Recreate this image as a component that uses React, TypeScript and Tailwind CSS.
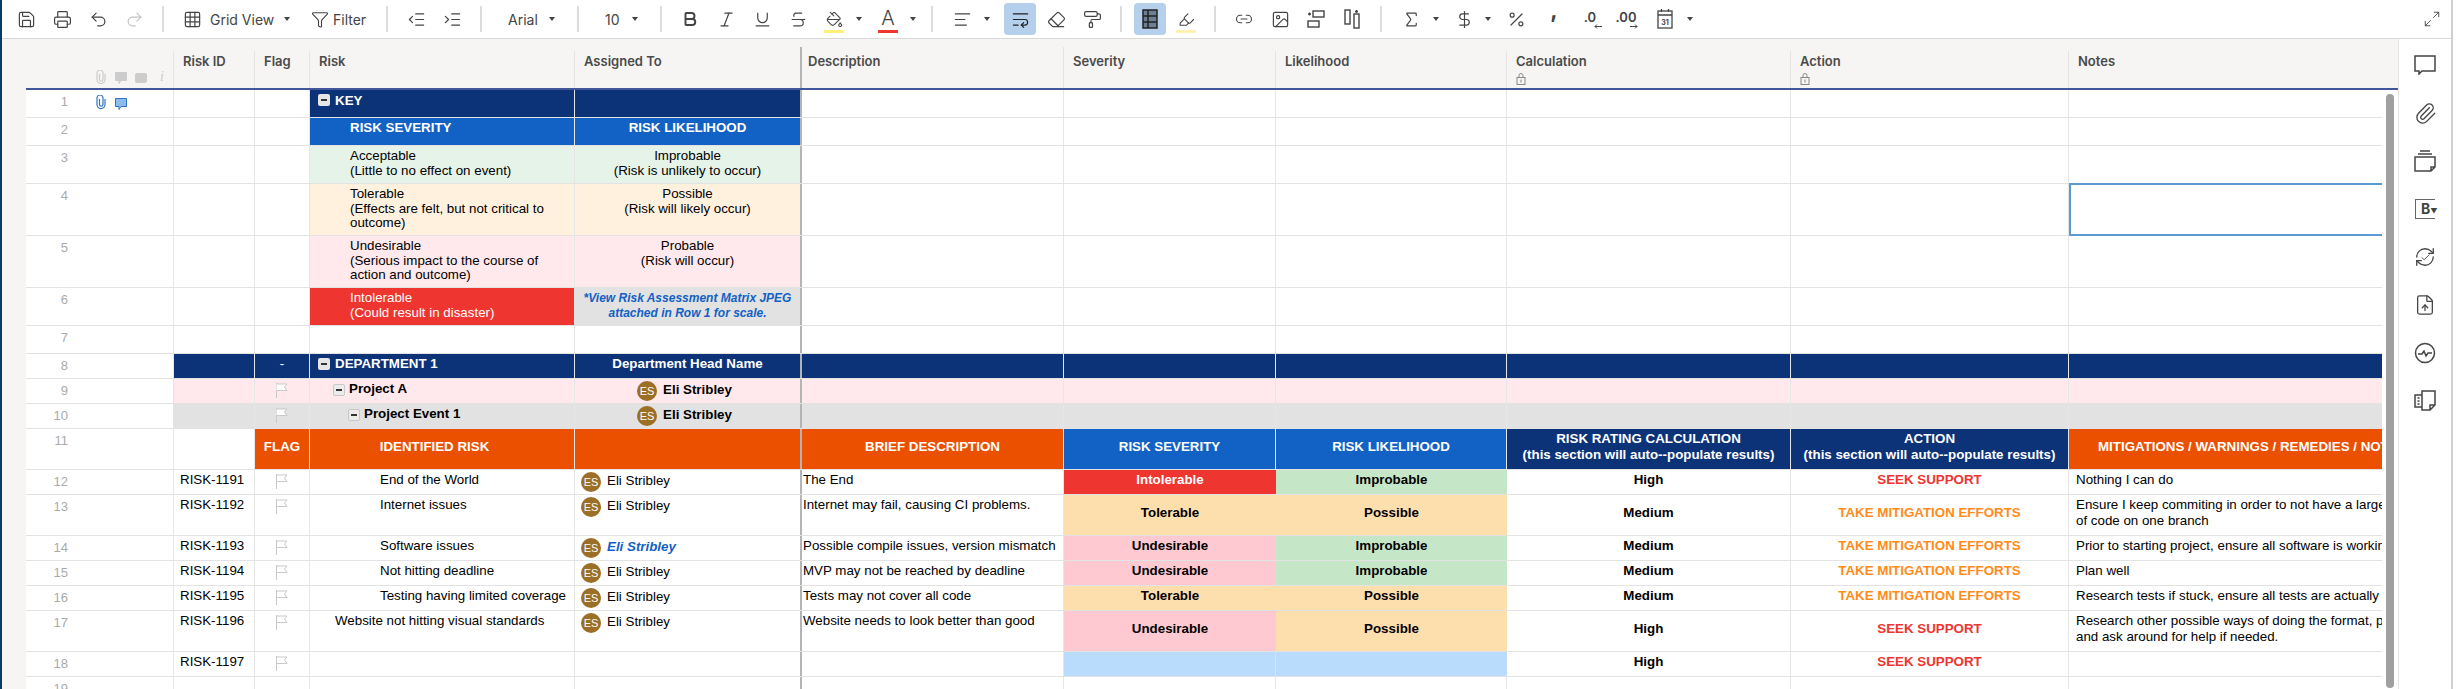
import type { ReactNode } from "react";
import { twMerge } from "tailwind-merge";
import {
  AlignLeft,
  Bold,
  Check,
  Eraser,
  FileUp,
  Funnel,
  Grid3x3,
  Highlighter,
  Image,
  IndentDecrease,
  IndentIncrease,
  Italic,
  Maximize2,
  PaintBucket,
  PaintRoller,
  Paperclip,
  Percent,
  Printer,
  Redo2,
  RefreshCw,
  Save,
  Sigma,
  DollarSign,
  Strikethrough,
  Underline,
  Undo2,
  Link2,
  WrapText,
} from "lucide-react";

const ic = { size: 19, strokeWidth: 1.5, color: "#444" };

function Btn({ children, className }: { children?: ReactNode; className?: string }) {
  return <div className={twMerge("flex h-[32px] w-[36px] shrink-0 items-center justify-center", className)}>{children}</div>;
}

function Caret({ className }: { className?: string }) {
  return (
    <svg viewBox="0 0 8 6" className={twMerge("h-[6px] w-[8px] shrink-0", className)}>
      <path d="M1 1h6L4 5z" fill="#444" />
    </svg>
  );
}

function Sep({ className }: { className?: string }) {
  return <div className={twMerge("ml-[10px] h-[26px] w-[2px] shrink-0 bg-[#dcdcdc]", className)} />;
}

function ColorBar({ color }: { color: string }) {
  return <div className="absolute bottom-[2px] left-[8px] h-[3px] w-[20px]" style={{ backgroundColor: color }} />;
}

function TinyArrow({ flip }: { flip?: boolean }) {
  return (
    <svg viewBox="0 0 8 5" className={twMerge("absolute bottom-[5px] right-[6px] h-[5px] w-[8px]", flip ? "rotate-180" : "")} fill="none" stroke="#444" strokeWidth="1">
      <path d="M8 2.5H1M3 .5l-2 2 2 2" />
    </svg>
  );
}

function Toolbar() {
  return (
    <div className="flex h-[39px] items-center border-b border-[#d8d8d8] pl-[6px] font-['Inter',sans-serif] text-[14px] text-[#444]">
      <Btn><Save {...ic} /></Btn>
      <Btn><Printer {...ic} /></Btn>
      <Btn><Undo2 {...ic} /></Btn>
      <Btn><Redo2 {...ic} color="#c4c4c4" /></Btn>
      <Sep />
      <Btn className="ml-[16px] w-[24px]"><Grid3x3 {...ic} /></Btn>
      <span className="ml-[6px] w-[61px] shrink-0 whitespace-nowrap">Grid View</span>
      <Caret className="ml-[12px]" />
      <Btn className="ml-[20px] w-[18px]"><Funnel {...ic} /></Btn>
      <span className="ml-[4px] w-[31px] shrink-0">Filter</span>
      <Sep className="ml-[22px]" />
      <Btn className="ml-[10px]"><IndentDecrease {...ic} /></Btn>
      <Btn><IndentIncrease {...ic} /></Btn>
      <Sep />
      <span className="ml-[26px] w-[29px] shrink-0">Arial</span>
      <Caret className="ml-[11px]" />
      <Sep className="ml-[21px]" />
      <span className="ml-[26px] w-[15px] shrink-0">10</span>
      <Caret className="ml-[11px]" />
      <Sep className="ml-[21px]" />
      <Btn className="ml-[10px]"><Bold size={18} strokeWidth={2.6} color="#444" /></Btn>
      <Btn><Italic {...ic} /></Btn>
      <Btn><Underline {...ic} /></Btn>
      <Btn><Strikethrough {...ic} /></Btn>
      <Btn className="relative"><PaintBucket size={17} strokeWidth={1.5} color="#444" /><ColorBar color="#fff176" /></Btn>
      <Caret className="ml-[3px]" />
      <Btn className="relative ml-[7px]">
        <span className="-mt-[3px] text-[20px] font-light leading-none">A</span>
        <ColorBar color="#ee3530" />
      </Btn>
      <Caret className="ml-[3px]" />
      <Sep className="ml-[14px]" />
      <Btn className="ml-[11px]"><AlignLeft {...ic} /></Btn>
      <Caret className="ml-[3px]" />
      <Btn className="ml-[13px] w-[32px] rounded-[4px] bg-[#b5d0ec]"><WrapText {...ic} color="#222" /></Btn>
      <Btn className="ml-[2px]"><Eraser {...ic} /></Btn>
      <Btn><PaintRoller {...ic} /></Btn>
      <Sep />
      <Btn className="ml-[12px] w-[32px] rounded-[4px] bg-[#b5d0ec]">
        <svg viewBox="0 0 16 20" className="h-[20px] w-[16px]" fill="none" stroke="#222" strokeWidth="1.5">
          <rect x="1" y="1" width="14" height="18" fill="#6d7f93" />
          <path d="M6 1v18M1 7h14M1 13h14" />
        </svg>
      </Btn>
      <Btn className="relative ml-[2px]"><Highlighter size={17} strokeWidth={1.5} color="#444" /><ColorBar color="#fff2b0" /></Btn>
      <Sep />
      <Btn className="ml-[10px]"><Link2 size={18} strokeWidth={1.5} color="#444" /></Btn>
      <Btn><Image {...ic} /></Btn>
      <Btn>
        <svg viewBox="0 0 18 20" className="h-[20px] w-[18px]" fill="none" stroke="#444" strokeWidth="1.4">
          <rect x="6" y="2" width="11" height="6" />
          <rect x="1" y="12" width="11" height="6" />
          <path d="M1 5h3M2.5 3.5v3" />
        </svg>
      </Btn>
      <Btn>
        <svg viewBox="0 0 18 20" className="h-[20px] w-[18px]" fill="none" stroke="#444" strokeWidth="1.4">
          <rect x="2" y="1" width="5" height="14" />
          <rect x="11" y="5" width="5" height="14" />
          <path d="M12 2.5h3M13.5 1v3" />
        </svg>
      </Btn>
      <Sep />
      <Btn className="ml-[11px]"><Sigma {...ic} /></Btn>
      <Caret className="ml-[3px]" />
      <Btn className="ml-[6px]"><DollarSign {...ic} /></Btn>
      <Caret className="ml-[2px]" />
      <Btn className="ml-[6px]"><Percent {...ic} /></Btn>
      <Btn className="ml-[2px] items-start text-[22px] font-bold leading-[14px]">,</Btn>
      <Btn className="relative -mt-[2px] text-[13px] font-semibold">.0<TinyArrow /></Btn>
      <Btn className="relative -mt-[2px] text-[13px] font-semibold">.00<TinyArrow flip /></Btn>
      <Btn className="ml-[3px]">
        <svg viewBox="0 0 16 22" className="h-[22px] w-[16px]" fill="none" stroke="#444" strokeWidth="1.3">
          <rect x="1" y="3" width="14" height="17" />
          <path d="M1 7h14M4.5 1v3M11.5 1v3" />
          <text x="8" y="16.5" fontSize="7" fontWeight="700" fill="#444" stroke="none" textAnchor="middle">31</text>
        </svg>
      </Btn>
      <Caret className="ml-[3px]" />
      <Btn className="ml-auto mr-[1px] w-[36px]"><Maximize2 size={18} strokeWidth={1.2} color="#444" /></Btn>
    </div>
  );
}

function PanelIcon({ children }: { children: ReactNode }) {
  return <div className="flex h-[48px] w-[53px] items-center justify-center pr-[1px]">{children}</div>;
}

function SidePanel() {
  const s = { fill: "none", stroke: "#444", strokeWidth: 1.5 };
  return (
    <div className="flex w-[53px] shrink-0 flex-col border-l border-[#e4e4e4] pt-[2px] font-['Inter',sans-serif]">
      <PanelIcon>
        <svg viewBox="0 0 22 20" className="h-[20px] w-[22px]" {...s}>
          <path d="M1 1h20v15H8l-3 3v-3H1z" />
        </svg>
      </PanelIcon>
      <PanelIcon><Paperclip size={23} strokeWidth={1.4} color="#444" /></PanelIcon>
      <PanelIcon>
        <svg viewBox="0 0 22 22" className="h-[22px] w-[22px]" {...s}>
          <path d="M1 7h20v10l-4 4H1zM17 21v-4h4M6 1h10M4 4h14" />
        </svg>
      </PanelIcon>
      <PanelIcon>
        <div className="flex h-[20px] w-[20px] items-center border-y border-l border-[#666] pl-[5px] text-[14px] font-bold leading-none text-[#444]">
          B<span className="mt-[4px] text-[7px]">▼</span>
        </div>
      </PanelIcon>
      <PanelIcon>
        <div className="relative flex items-center justify-center">
          <RefreshCw size={22} strokeWidth={1.4} color="#444" />
          <Check size={11} strokeWidth={2} color="#444" className="absolute" />
        </div>
      </PanelIcon>
      <PanelIcon><FileUp size={22} strokeWidth={1.4} color="#444" /></PanelIcon>
      <PanelIcon>
        <svg viewBox="0 0 22 22" className="h-[22px] w-[22px]" {...s}>
          <circle cx="11" cy="11" r="9.5" />
          <path d="M4 12h4l2-3 2 5 2-3h4" />
        </svg>
      </PanelIcon>
      <PanelIcon>
        <svg viewBox="0 0 22 22" className="h-[22px] w-[22px]" {...s}>
          <path d="M8 1h13v14l-5 5H8zM16 20v-5h5M8 5H1v12h7M3.5 8h2M3.5 11h2M3.5 14h2" />
        </svg>
      </PanelIcon>
    </div>
  );
}

const GRID = "grid grid-cols-[148px_81px_55px_265px_225px_264px_212px_231px_284px_278px_313px]";
const ARIAL = "font-['Liberation_Sans',Arial,sans-serif] text-[13.33px] text-black";

function ClipIcon({ color }: { color: string }) {
  return (
    <svg viewBox="0 0 12 14" className="h-[14px] w-[12px] shrink-0" fill="none" stroke={color} strokeWidth="1.2">
      <path d="M4.5 4v5.5a1.75 1.75 0 0 0 3.5 0V3a3 3 0 0 0-6 0v6.5a4 4 0 0 0 8 0V4" />
    </svg>
  );
}

function BubbleIcon({ fill, stroke }: { fill: string; stroke: string }) {
  return (
    <svg viewBox="0 0 12 12" className="h-[12px] w-[12px] shrink-0" fill={fill} stroke={stroke} strokeWidth="1">
      <path d="M.5.5h11v8H6l-2 3v-3H.5z" />
    </svg>
  );
}

function HeadCell({ label, lock, className }: { label: string; lock?: boolean; className?: string }) {
  return (
    <div className={twMerge("mt-[12px] border-r border-[#e4e4e4] pl-[9px] pt-[2px] text-[13px] font-semibold leading-[16px] text-[#4a4a4a]", className)}>
      {label}
      {lock && (
        <svg viewBox="0 0 10 12" className="mt-[4px] h-[12px] w-[10px]" fill="none" stroke="#888" strokeWidth="1">
          <rect x="1" y="4.5" width="8" height="7" />
          <path d="M3 4.5V2.5a2 2 0 0 1 4 0v2M5 6.5v3" />
        </svg>
      )}
    </div>
  );
}

function GridHeader() {
  return (
    <div className="ml-[24px] grid h-[51px] grid-cols-[148px_81px_55px_265px_225px_264px_212px_231px_284px_278px_313px_16px] border-b-2 border-[#41579a] font-['Inter',sans-serif]">
      <div className="mt-[12px] flex items-start gap-[8px] border-r border-[#e4e4e4] pl-[69px] pt-[19px]">
        <ClipIcon color="#ccc" />
        <div className="mt-[2px]"><BubbleIcon fill="#ccc" stroke="#ccc" /></div>
        <div className="mt-[3px] h-[10px] w-[12px] rounded-[2px] bg-[#ccc]" />
        <span className="ml-[5px] font-['Liberation_Serif',serif] text-[14px] italic leading-[14px] text-[#ccc]">i</span>
      </div>
      <HeadCell label="Risk ID" />
      <HeadCell label="Flag" />
      <HeadCell label="Risk" />
      <HeadCell label="Assigned To" className="border-r-0" />
      <HeadCell label="Description" className="mt-[8px] border-l-2 border-l-[#b4b4b4] pl-[6px] pt-[6px]" />
      <HeadCell label="Severity" />
      <HeadCell label="Likelihood" />
      <HeadCell label="Calculation" lock />
      <HeadCell label="Action" lock />
      <HeadCell label="Notes" className="border-r-0" />
    </div>
  );
}

function Cell({ className, children }: { className?: string; children?: ReactNode }) {
  return (
    <div className={twMerge("relative overflow-hidden border-r border-[#e6e6e6] pt-[2px] leading-[16px]", className)}>{children}</div>
  );
}

function Centered({ className, children }: { className?: string; children?: ReactNode }) {
  return <Cell className={twMerge("flex items-center justify-center pb-[4px] pt-0 text-center font-bold", className)}>{children}</Cell>;
}

function Row({ num, h, children, icons }: { num: number; h: string; children?: ReactNode; icons?: boolean }) {
  return (
    <div className={twMerge(GRID, ARIAL, "border-b border-[#e3e3e3]", h)}>
      <div className="flex border-r border-[#e6e6e6] pt-[4px]">
        <span className="w-[42px] text-right text-[13px] leading-[16px] text-[#aaa]">{num}</span>
        {icons && (
          <div className="ml-[27px] mt-px flex items-start gap-[8px]">
            <ClipIcon color="#2f74c0" />
            <div className="mt-[3px]"><BubbleIcon fill="#8cbcec" stroke="#2f74c0" /></div>
          </div>
        )}
      </div>
      {children}
    </div>
  );
}

function Rest({ className }: { className?: string }) {
  return (
    <>
      <Cell className={twMerge("border-l-2 border-l-[#b4b4b4]", className)} />
      <Cell className={className} />
      <Cell className={className} />
      <Cell className={className} />
      <Cell className={className} />
      <Cell className={twMerge("border-r-0", className)} />
    </>
  );
}

function Collapse({ big, className }: { big?: boolean; className?: string }) {
  return (
    <div
      className={twMerge(
        "flex shrink-0 items-center justify-center rounded-[2px]",
        big ? "h-[12px] w-[12px] bg-[#e6e6e6]" : "h-[12px] w-[12px] border border-[#c8c8c8] bg-[#ececec]",
        className,
      )}
    >
      <div className="h-[2px] w-[6px] bg-[#333]" />
    </div>
  );
}

function Flag({ solid }: { solid?: boolean }) {
  return (
    <div className="flex justify-center pt-[2px]">
      <svg viewBox="0 0 12 15" className="h-[15px] w-[12px]" fill={solid ? "#fff" : "none"} stroke="#c9c9c9" strokeWidth="1">
        <path d="M.5 0v15" />
        <path d="M.5 1H11L8.5 4 11 7.5H.5" />
      </svg>
    </div>
  );
}

function Avatar({ name, className }: { name: string; className?: string }) {
  return (
    <div className={twMerge("flex items-start", className)}>
      <div className="flex h-[20px] w-[20px] shrink-0 items-center justify-center rounded-full bg-[#9b6f25] text-[11px] font-normal not-italic leading-none text-white">
        ES
      </div>
      <span className="ml-[6px] whitespace-nowrap pt-[1px]">{name}</span>
    </div>
  );
}

const KEY_H = "leading-[14.5px] pt-[3px]";

function KeyCells({ bg, left, right, rightClass }: { bg: string; left: ReactNode; right: ReactNode; rightClass?: string }) {
  return (
    <>
      <Cell />
      <Cell />
      <Cell className={twMerge(KEY_H, "pl-[40px]", bg)}>{left}</Cell>
      <Cell className={twMerge(KEY_H, "border-r-0 text-center", bg, rightClass)}>{right}</Cell>
      <Rest />
    </>
  );
}

type Risk = {
  num: number;
  h: string;
  id: string;
  risk: string;
  indent: string;
  desc: string;
  sev: keyof typeof SEV | "";
  like: keyof typeof SEV | "";
  calc: string;
  action: "SEEK SUPPORT" | "TAKE MITIGATION EFFORTS";
  notes: ReactNode;
  highlighted?: boolean;
};

const SEV = {
  Intolerable: "bg-[#ee3530] text-white",
  Tolerable: "bg-[#fddfae]",
  Possible: "bg-[#fddfae]",
  Undesirable: "bg-[#ffc9d2]",
  Improbable: "bg-[#c6e6c8]",
};

const risks: Risk[] = [
  { num: 12, h: "h-[25px]", id: "RISK-1191", risk: "End of the World", indent: "pl-[70px]", desc: "The End", sev: "Intolerable", like: "Improbable", calc: "High", action: "SEEK SUPPORT", notes: "Nothing I can do" },
  { num: 13, h: "h-[41px]", id: "RISK-1192", risk: "Internet issues", indent: "pl-[70px]", desc: "Internet may fail, causing CI problems.", sev: "Tolerable", like: "Possible", calc: "Medium", action: "TAKE MITIGATION EFFORTS", notes: <>Ensure I keep commiting in order to not have a large amount<br />of code on one branch</> },
  { num: 14, h: "h-[25px]", id: "RISK-1193", risk: "Software issues", indent: "pl-[70px]", desc: "Possible compile issues, version mismatch", sev: "Undesirable", like: "Improbable", calc: "Medium", action: "TAKE MITIGATION EFFORTS", notes: "Prior to starting project, ensure all software is working", highlighted: true },
  { num: 15, h: "h-[25px]", id: "RISK-1194", risk: "Not hitting deadline", indent: "pl-[70px]", desc: "MVP may not be reached by deadline", sev: "Undesirable", like: "Improbable", calc: "Medium", action: "TAKE MITIGATION EFFORTS", notes: "Plan well" },
  { num: 16, h: "h-[25px]", id: "RISK-1195", risk: "Testing having limited coverage", indent: "pl-[70px]", desc: "Tests may not cover all code", sev: "Tolerable", like: "Possible", calc: "Medium", action: "TAKE MITIGATION EFFORTS", notes: "Research tests if stuck, ensure all tests are actually run" },
  { num: 17, h: "h-[41px]", id: "RISK-1196", risk: "Website not hitting visual standards", indent: "pl-[25px]", desc: "Website needs to look better than good", sev: "Undesirable", like: "Possible", calc: "High", action: "SEEK SUPPORT", notes: <>Research other possible ways of doing the format, page layout<br />and ask around for help if needed.</> },
  { num: 18, h: "h-[25px]", id: "RISK-1197", risk: "", indent: "", desc: "", sev: "", like: "", calc: "High", action: "SEEK SUPPORT", notes: "" },
];

function Rows() {
  const navy = "bg-[#0c3378] text-white";
  const blue = "bg-[#1261c4] text-white";
  const orange = "bg-[#eb5000] text-white";
  return (
    <div className="w-[2356px] shrink-0 bg-white">
      <Row num={1} h="h-[28px]" icons>
        <Cell />
        <Cell />
        <Cell className={twMerge("flex items-start pl-[8px] pt-[3px] font-bold leading-[15px]", navy)}>
          <Collapse big className="mt-px" />
          <span className="ml-[5px]">KEY</span>
        </Cell>
        <Cell className={twMerge("border-r-0", navy)} />
        <Rest />
      </Row>
      <Row num={2} h="h-[28px]">
        <KeyCells bg={twMerge("font-bold", blue)} left="RISK SEVERITY" right="RISK LIKELIHOOD" />
      </Row>
      <Row num={3} h="h-[38px]">
        <KeyCells bg="bg-[#e6f3e8]" left={<>Acceptable<br />(Little to no effect on event)</>} right={<>Improbable<br />(Risk is unlikely to occur)</>} />
      </Row>
      <Row num={4} h="h-[52px]">
        <Cell />
        <Cell />
        <Cell className={twMerge(KEY_H, "bg-[#fff1de] pl-[40px]")}>Tolerable<br />(Effects are felt, but not critical to<br />outcome)</Cell>
        <Cell className={twMerge(KEY_H, "border-r-0 bg-[#fff1de] text-center")}>Possible<br />(Risk will likely occur)</Cell>
        <Cell className="border-l-2 border-l-[#b4b4b4]" />
        <Cell />
        <Cell />
        <Cell />
        <Cell />
        <Cell className="overflow-visible border-r-0">
          <div className="absolute -top-px bottom-[-1px] left-0 right-0 border-2 border-r-0 border-[#5b9bd5]" />
        </Cell>
      </Row>
      <Row num={5} h="h-[52px]">
        <KeyCells bg="bg-[#ffe9ec]" left={<>Undesirable<br />(Serious impact to the course of<br />action and outcome)</>} right={<>Probable<br />(Risk will occur)</>} />
      </Row>
      <Row num={6} h="h-[38px]">
        <Cell />
        <Cell />
        <Cell className={twMerge(KEY_H, "bg-[#ee3530] pl-[40px] text-white")}>Intolerable<br />(Could result in disaster)</Cell>
        <Cell className="border-r-0 bg-[#e2e2e2] pt-[3px] text-center text-[12px] font-bold italic leading-[14.5px] text-[#1261c4]">
          *View Risk Assessment Matrix JPEG<br />attached in Row 1 for scale.
        </Cell>
        <Rest />
      </Row>
      <Row num={7} h="h-[28px]">
        <Cell />
        <Cell />
        <Cell />
        <Cell className="border-r-0" />
        <Rest />
      </Row>
      <Row num={8} h="h-[25px]">
        <Cell className={navy} />
        <Cell className={twMerge("text-center", navy)}>-</Cell>
        <Cell className={twMerge("flex items-start pl-[8px] font-bold", navy)}>
          <Collapse big className="mt-[2px]" />
          <span className="ml-[5px]">DEPARTMENT 1</span>
        </Cell>
        <Cell className={twMerge("border-r-0 text-center font-bold", navy)}>Department Head Name</Cell>
        <Rest className={navy} />
      </Row>
      <Row num={9} h="h-[25px]">
        <Cell className="bg-[#ffe9ec]" />
        <Cell className="bg-[#ffe9ec]"><Flag solid /></Cell>
        <Cell className="flex items-start bg-[#ffe9ec] pl-[23px] font-bold">
          <Collapse className="mt-[3px]" />
          <span className="ml-[4px]">Project A</span>
        </Cell>
        <Cell className="flex justify-center border-r-0 bg-[#ffe9ec] pr-[6px] font-bold"><Avatar name="Eli Stribley" /></Cell>
        <Rest className="bg-[#ffe9ec]" />
      </Row>
      <Row num={10} h="h-[25px]">
        <Cell className="bg-[#e2e2e2]" />
        <Cell className="bg-[#e2e2e2]"><Flag solid /></Cell>
        <Cell className="flex items-start bg-[#e2e2e2] pl-[38px] font-bold">
          <Collapse className="mt-[3px]" />
          <span className="ml-[4px]">Project Event 1</span>
        </Cell>
        <Cell className="flex justify-center border-r-0 bg-[#e2e2e2] pr-[6px] font-bold"><Avatar name="Eli Stribley" /></Cell>
        <Rest className="bg-[#e2e2e2]" />
      </Row>
      <Row num={11} h="h-[41px]">
        <Cell />
        <Centered className={orange}>FLAG</Centered>
        <Centered className={twMerge("pr-[15px]", orange)}>IDENTIFIED RISK</Centered>
        <Centered className={twMerge("border-r-0", orange)} />
        <Centered className={twMerge("border-l-2 border-l-[#b4b4b4]", orange)}>BRIEF DESCRIPTION</Centered>
        <Centered className={blue}>RISK SEVERITY</Centered>
        <Centered className={blue}>RISK LIKELIHOOD</Centered>
        <Centered className={navy}>RISK RATING CALCULATION<br />(this section will auto--populate results)</Centered>
        <Centered className={navy}>ACTION<br />(this section will auto--populate results)</Centered>
        <Centered className={twMerge("justify-start whitespace-nowrap border-r-0 pl-[29px]", orange)}>MITIGATIONS / WARNINGS / REMEDIES / NOTES</Centered>
      </Row>
      {risks.map((r) => (
        <Row key={r.num} num={r.num} h={r.h}>
          <Cell className="pl-[6px]">{r.id}</Cell>
          <Cell><Flag /></Cell>
          <Cell className={twMerge("whitespace-nowrap", r.indent)}>{r.risk}</Cell>
          <Cell className="border-r-0 pl-[6px]">
            {r.risk && <Avatar name="Eli Stribley" className={r.highlighted ? "font-bold italic text-[#1261c4]" : ""} />}
          </Cell>
          <Cell className="whitespace-nowrap border-l-2 border-l-[#b4b4b4] pl-px">{r.desc}</Cell>
          <Centered className={twMerge("border-r-0", r.sev ? SEV[r.sev] : "border-r border-[#cfe5fb] bg-[#b9dcfc]")}>{r.sev}</Centered>
          <Centered className={twMerge("border-r-0", r.like ? SEV[r.like] : "bg-[#b9dcfc]")}>{r.like}</Centered>
          <Centered>{r.calc}</Centered>
          <Centered className={r.action === "SEEK SUPPORT" ? "text-[#ee3530]" : "text-[#ff8c1a]"}>{r.action}</Centered>
          <Cell className="whitespace-nowrap border-r-0 pl-[7px]">{r.notes}</Cell>
        </Row>
      ))}
      <Row num={19} h="h-[25px]">
        <Cell />
        <Cell />
        <Cell />
        <Cell className="border-r-0" />
        <Rest />
      </Row>
    </div>
  );
}

export default function App() {
  return (
    <div className="flex h-[689px] w-[2456px] overflow-hidden border-l-2 border-[#0c3a66] bg-white">
      <div className="flex w-[2449px] shrink-0 flex-col">
        <Toolbar />
        <div className="flex min-h-0 flex-1">
          <div className="flex w-[2396px] shrink-0 flex-col bg-[#f6f5f3]">
            <GridHeader />
            <div className="flex min-h-0 flex-1 overflow-hidden">
              <div className="w-[24px] shrink-0" />
              <Rows />
              <div className="flex-1 bg-white pl-[4px] pt-[4px]">
                <div className="h-[594px] w-[8px] rounded-full bg-[#a0a0a0]" />
              </div>
            </div>
          </div>
          <SidePanel />
        </div>
      </div>
      <div className="h-full w-[2px] shrink-0 bg-[#cfcfcf]" />
    </div>
  );
}
